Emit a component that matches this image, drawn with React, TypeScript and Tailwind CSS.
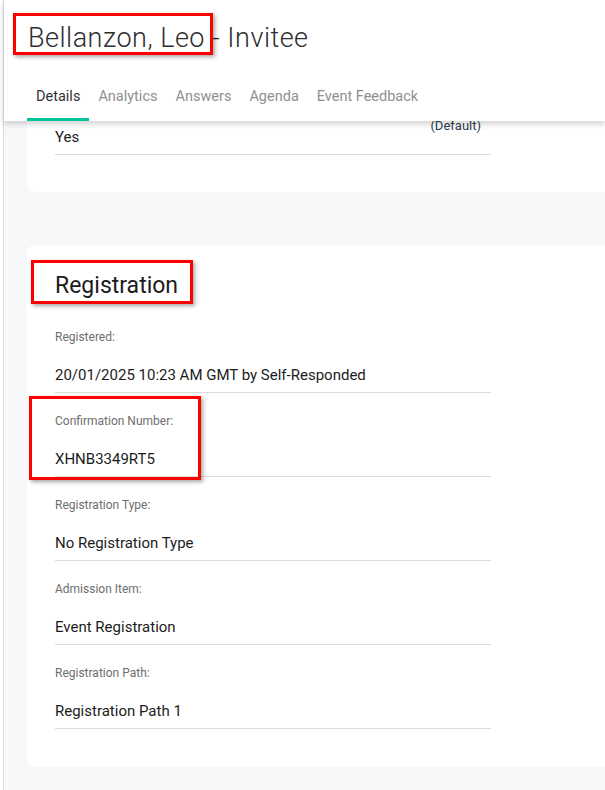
import React from 'react';

const fields = [
  { label: 'Registered:', value: '20/01/2025 10:23 AM GMT by Self-Responded' },
  { label: 'Confirmation Number:', value: 'XHNB3349RT5', marked: true },
  { label: 'Registration Type:', value: 'No Registration Type' },
  { label: 'Admission Item:', value: 'Event Registration' },
  { label: 'Registration Path:', value: 'Registration Path 1' },
];

const tabs = ['Details', 'Analytics', 'Answers', 'Agenda', 'Event Feedback'];

const markShadow = 'shadow-[2px_2px_4px_rgba(0,0,0,0.35)]';

export default function App() {
  return (
    <div className="min-h-[790px] bg-white pl-[3px] font-['Roboto',sans-serif]">
      <div className="min-h-[790px] border-l border-[#dcdcdc] bg-[#f7f8fa] pb-[22px]">
        {/* header */}
        <div className="relative z-10 h-[121px] bg-white pl-[23px] shadow-[0_3px_6px_rgba(0,0,0,0.18)]">
          <h1 className="pl-[1px] pt-[20px] text-[27px] leading-[36px] font-light tracking-[0.5px] text-[#2e2e2e]">
            Bellanzon, Leo - Invitee
          </h1>
          <div
            className={`absolute left-[9px] top-[13px] h-[42px] w-[200px] border-[3px] border-[#ff0000] ${markShadow}`}
          />
          <nav className="mt-[31px] flex">
            {tabs.map((t, i) => (
              <div
                key={t}
                className={`px-[9px] pb-[11px] text-[14.5px] leading-[20px] border-b-[3px] ${
                  i === 0 ? 'border-[#00c49a] text-[#333]' : 'border-transparent text-[#8f8f8f]'
                }`}
              >
                {t}
              </div>
            ))}
          </nav>
        </div>

        {/* previous card, scrolled under header */}
        <div className="-mt-[5px] ml-[23px] rounded-bl-lg bg-white px-[28px] pb-[37px]">
          <div className="flex h-[39px] w-[436px] items-start justify-between border-b border-[#dadada]">
            <span className="pt-[11px] text-[15px] leading-[20px] text-[#222]">Yes</span>
            <span className="pr-[10px] pt-[2px] text-[13px] leading-[16px] text-[#2d3b50]">(Default)</span>
          </div>
        </div>

        {/* registration card */}
        <div className="ml-[23px] mt-[53px] rounded-l-lg bg-white px-[28px] pb-[38px] pt-[15px]">
          <div className={`-ml-[24px] mb-[5px] inline-block border-[3px] border-[#ff0000] pl-[21px] pr-[12px] pt-[8px] ${markShadow}`}>
            <h2 className="text-[23px] leading-[30px] font-normal text-[#1c1c1c]">Registration</h2>
          </div>
          <div className="w-[436px]">
            {fields.map((f) => (
              <div key={f.label} className="relative border-b border-[#dadada] pb-[7px] pt-[20px]">
                <div className="text-[12px] leading-[16px] text-[#6e6e6e]">{f.label}</div>
                <div className="mt-[20px] text-[15px] leading-[20px] text-[#1c1c1c]">{f.value}</div>
                {f.marked && (
                  <div
                    className={`absolute -left-[26px] top-[3px] h-[84px] w-[172px] border-[3px] border-[#ff0000] ${markShadow}`}
                  />
                )}
              </div>
            ))}
          </div>
        </div>
      </div>
    </div>
  );
}
